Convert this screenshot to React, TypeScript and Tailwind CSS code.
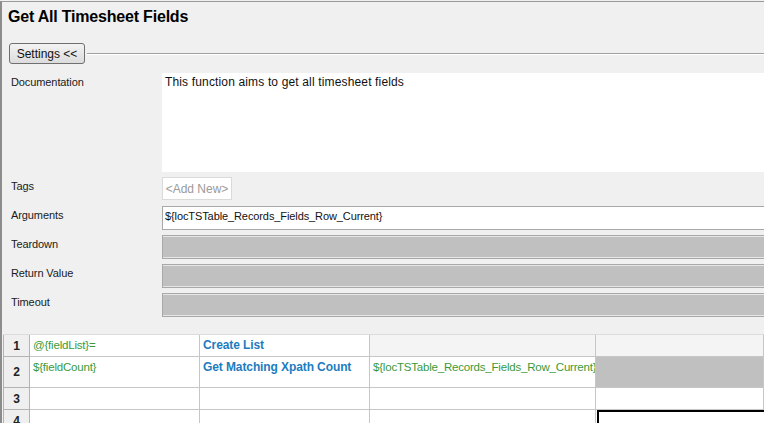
const font = { fontFamily: '"Liberation Sans", Arial, sans-serif' }

function FieldRow({ label, children, className = '' }: { label: string; children: React.ReactNode; className?: string }) {
  return (
    <div className={`flex ${className}`}>
      <div className="w-[160px] shrink-0 pl-[9px] pt-[2px] text-[11px] leading-[14px] tracking-[-0.1px] text-[#1a1a1a]">{label}</div>
      <div className="flex-1">{children}</div>
    </div>
  )
}

function GrayBox() {
  return <div className="h-[24px] border border-r-0 border-[#a8a8a8] bg-[#c0c0c0] shadow-[inset_0_1px_0_#e6e6e6,inset_0_-1px_0_#e6e6e6]" />
}

const green = 'text-[#3a9a3a] text-[11.5px] tracking-[-0.2px]'
const blue = 'text-[#1d7cbf] font-bold text-[12px] tracking-[-0.1px]'

function Cell({ children, className = '' }: { children?: React.ReactNode; className?: string }) {
  return (
    <div className={`border-r border-b border-[#c6c6c6] pl-[3px] pt-[3px] leading-[15px] whitespace-nowrap overflow-hidden ${className}`}>
      {children}
    </div>
  )
}

function RowNum({ n }: { n: number }) {
  return (
    <div className="flex items-center justify-center border-l border-r border-b border-[#b4b4b4] bg-[#efefef] text-[12px] font-bold text-[#222]">
      {n}
    </div>
  )
}

export default function App() {
  return (
    <div className="w-[764px] h-[423px] overflow-hidden bg-[#f0f0f0] pt-px" style={font}>
      <div className="h-full border-t border-l-2 border-[#8c8c8c] border-t-[#9a9a9a]">
        <div className="pl-[6px] pt-[5px] text-[16px] leading-[20px] font-bold tracking-[-0.2px] text-black">Get All Timesheet Fields</div>

        <div className="mt-[16px] flex items-center pl-[7px]">
          <button className="h-[21px] w-[76px] rounded-[3px] border border-[#707070] bg-gradient-to-b from-[#f3f3f3] to-[#dcdcdc] text-[12px] leading-[14px] text-[#111]">
            Settings &lt;&lt;
          </button>
          <div className="ml-[2px] h-[2px] flex-1 border-t border-b border-t-[#a0a0a0] border-b-white" />
        </div>

        <FieldRow label="Documentation" className="mt-[9px]">
          <div className="h-[99px] bg-white pl-[3px] pt-[2px] text-[12px] leading-[15px] tracking-[0.15px] text-[#111]">
            This function aims to get all timesheet fields
          </div>
        </FieldRow>

        <FieldRow label="Tags" className="mt-[5px]">
          <div className="flex h-[23px] w-[70px] items-center justify-center border border-[#dadada] bg-white text-[12px] text-[#9a9a9a]">
            &lt;Add New&gt;
          </div>
        </FieldRow>

        <FieldRow label="Arguments" className="mt-[6px]">
          <div className="h-[24px] border border-r-0 border-[#a8a8a8] bg-white pl-[2px] pt-[2px] text-[11px] leading-[14px] tracking-[-0.1px] text-[#111]">
            {'${locTSTable_Records_Fields_Row_Current}'}
          </div>
        </FieldRow>

        <FieldRow label="Teardown" className="mt-[5px]">
          <GrayBox />
        </FieldRow>
        <FieldRow label="Return Value" className="mt-[5px]">
          <GrayBox />
        </FieldRow>
        <FieldRow label="Timeout" className="mt-[5px]">
          <GrayBox />
        </FieldRow>

        <div className="mt-[17px] ml-px grid grid-cols-[27px_170px_170px_226px_1fr] grid-rows-[22px_31px_22px_22px] border-t border-[#dcdcdc] bg-white">
          <RowNum n={1} />
          <Cell className={green}>{'@{fieldList}='}</Cell>
          <Cell className={blue}>Create List</Cell>
          <Cell className="bg-[#f4f4f4]" />
          <Cell className="bg-[#f4f4f4]" />

          <RowNum n={2} />
          <Cell className={green}>{'${fieldCount}'}</Cell>
          <Cell className={blue}>Get Matching Xpath Count</Cell>
          <Cell className={green}>{'${locTSTable_Records_Fields_Row_Current}'}</Cell>
          <Cell className="bg-[#c0c0c0]" />

          <RowNum n={3} />
          <Cell />
          <Cell />
          <Cell />
          <Cell />

          <RowNum n={4} />
          <Cell />
          <Cell />
          <Cell />
          <div className="pl-px">
            <div className="h-full border-2 border-r-0 border-b-0 border-black" />
          </div>
        </div>
      </div>
    </div>
  )
}
